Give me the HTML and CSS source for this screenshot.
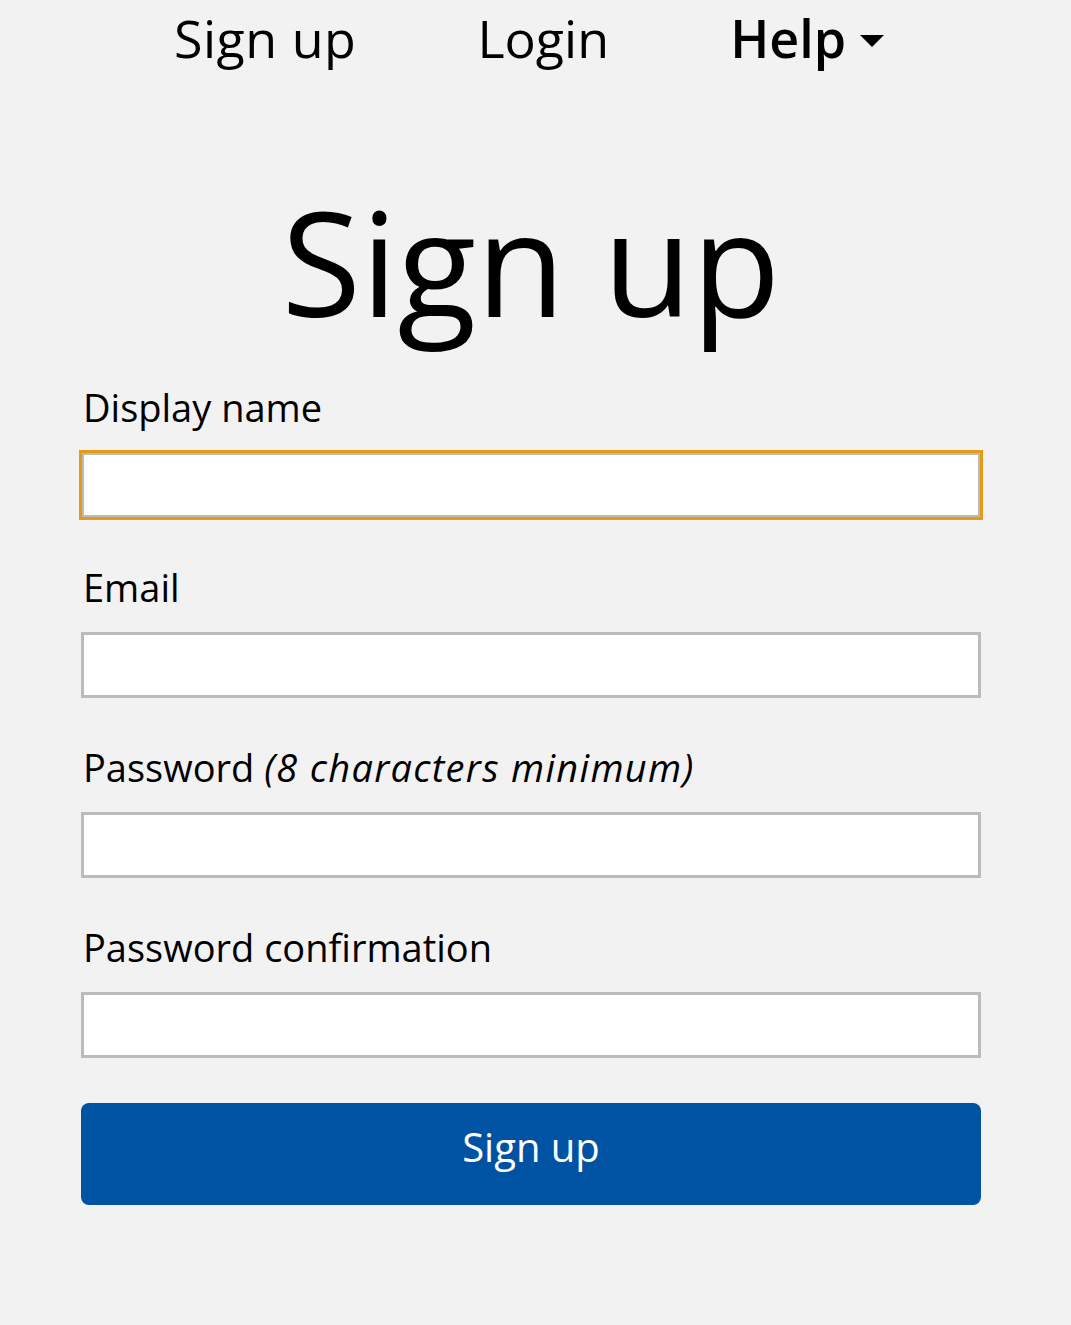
FILE: index.html
```html
<!DOCTYPE html>
<html lang="en">
<head>
<meta charset="utf-8">
<title>Sign up</title>
<link rel="stylesheet" href="styles.css">
</head>
<body>
<div class="page">
  <nav class="nav">
    <a class="nav-link" href="#">Sign up</a>
    <a class="nav-link" href="#">Login</a>
    <a class="nav-link nav-help" href="#">Help <span class="caret"></span></a>
  </nav>
  <h1 class="title">Sign up</h1>
  <form class="form">
    <div class="field">
      <label class="label" for="name">Display name</label>
      <input class="input input-focus" id="name" type="text">
    </div>
    <div class="field">
      <label class="label" for="email">Email</label>
      <input class="input" id="email" type="email">
    </div>
    <div class="field">
      <label class="label" for="pw">Password <em class="hint">(8 characters minimum)</em></label>
      <input class="input" id="pw" type="password">
    </div>
    <div class="field">
      <label class="label" for="pw2">Password confirmation</label>
      <input class="input" id="pw2" type="password">
    </div>
    <button class="submit" type="button">Sign up</button>
  </form>
</div>
</body>
</html>
```

FILE: styles.css
```css
html, body {
  margin: 0;
  padding: 0;
  background: #f2f2f2;
}
body {
  font-family: "Open Sans", "Noto Sans", sans-serif;
  color: #000;
  height: 1325px;
}
.page {
  width: 900px;
  margin-left: 81px;
  padding-top: 3px;
}
.nav {
  display: flex;
  justify-content: center;
  align-items: center;
  gap: 121px;
  height: 70px;
  margin-left: -4px;
}
.nav-link {
  font-size: 52px;
  line-height: 70px;
  color: #000;
  text-decoration: none;
  white-space: nowrap;
}
.nav-link:first-child {
  letter-spacing: 0.5px;
}
.nav-help {
  font-weight: 600;
  display: flex;
  align-items: center;
  gap: 14px;
}
.caret {
  display: inline-block;
  width: 0;
  height: 0;
  border-left: 12px solid transparent;
  border-right: 12px solid transparent;
  border-top: 12px solid #000;
  margin-top: 6px;
}
.title {
  margin: 108px 0 0;
  font-size: 145px;
  line-height: 160px;
  font-weight: 400;
  text-align: center;
}
.form {
  margin-top: 41px;
  display: flex;
  flex-direction: column;
}
.field {
  display: flex;
  flex-direction: column;
  margin-bottom: 44px;
}
.field:last-of-type {
  margin-bottom: 45px;
}
.label {
  font-size: 38px;
  line-height: 50px;
  padding-left: 2px;
  margin-bottom: 20px;
}
.hint {
  font-style: italic;
  letter-spacing: 1.3px;
}
.input {
  box-sizing: border-box;
  width: 900px;
  height: 66px;
  margin: 0;
  border: 3px solid #bbbbbb;
  border-radius: 0;
  background: #fff;
  font-family: inherit;
  font-size: 30px;
  padding: 0 12px;
}
.input-focus {
  outline: 3px solid #e59c12;
  outline-offset: -1px;
}
.submit {
  box-sizing: border-box;
  width: 900px;
  height: 102px;
  margin: 0;
  border: 0;
  border-radius: 8px;
  background: #0053a3;
  color: #fff;
  font-family: inherit;
  font-size: 40px;
  line-height: 88px;
  padding: 0 0 14px;
  text-align: center;
}
```
